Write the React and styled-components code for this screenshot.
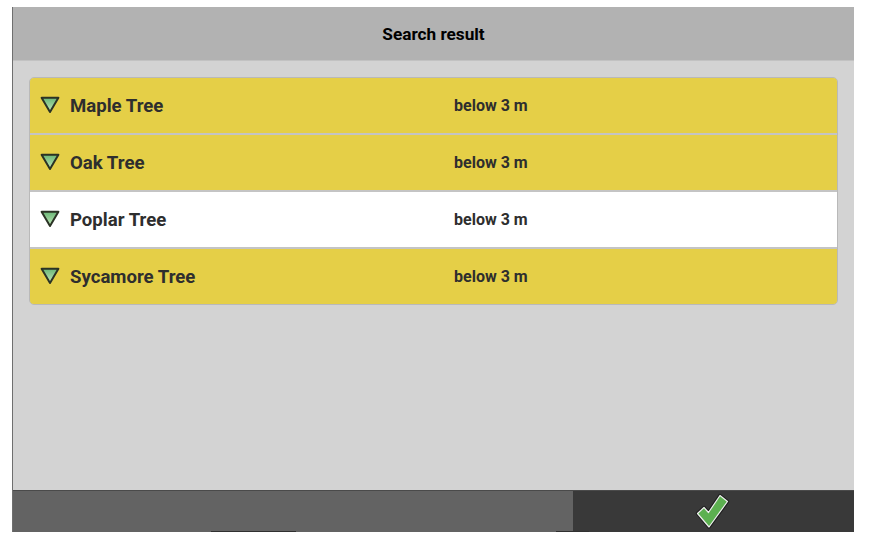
import React from "react";
import styled, { createGlobalStyle } from "styled-components";

const GlobalStyle = createGlobalStyle`
  html, body {
    margin: 0;
    padding: 0;
    background: #fff;
    font-family: Roboto, "Liberation Sans", sans-serif;
  }
`;

const trees = [
  { name: "Maple Tree", height: "below 3 m" },
  { name: "Oak Tree", height: "below 3 m" },
  { name: "Poplar Tree", height: "below 3 m", selected: true },
  { name: "Sycamore Tree", height: "below 3 m" },
];

const Page = styled.div`
  width: 842px;
  height: 525px;
  margin: 7px 0 0 12px;
  display: flex;
  flex-direction: column;
  background: #d3d3d3;
  border-left: 1px solid #6f6f6f;
  box-sizing: border-box;
`;

const Header = styled.div`
  height: 54px;
  flex-shrink: 0;
  display: flex;
  align-items: center;
  justify-content: center;
  background: #b2b2b2;
  border-bottom: 1px solid #c2c2c2;
  box-sizing: border-box;
  font-size: 17.2px;
  font-weight: 700;
  color: #000;
`;

const Content = styled.div`
  flex: 1;
  padding: 16px 16px 0 16px;
`;

const List = styled.div`
  border: 1px solid #b9b9b9;
  border-radius: 5px;
  overflow: hidden;
  display: flex;
  flex-direction: column;
`;

const Row = styled.div`
  height: 57px;
  box-sizing: border-box;
  display: flex;
  align-items: center;
  background: ${(p) => (p.$selected ? "#ffffff" : "#e5cf47")};
  color: #2e2e2e;
  font-weight: 700;
  border-bottom: 2px solid #c4c4c4;
  &:last-child {
    height: 55px;
    border-bottom: none;
  }
`;

const Arrow = styled.svg`
  width: 20px;
  height: 18px;
  margin: -2px 0 0 10px;
  flex-shrink: 0;
`;

const Name = styled.div`
  width: 384px;
  margin-left: 10px;
  font-size: 18.6px;
`;

const Height = styled.div`
  font-size: 16px;
`;

const Footer = styled.div`
  position: relative;
  height: 42px;
  flex-shrink: 0;
  display: flex;
  border-top: 1px solid #4a4a4a;
  box-sizing: border-box;
`;

const FooterSpace = styled.div`
  width: 560px;
  background: #636363;
`;

const ConfirmButton = styled.div`
  flex: 1;
  display: flex;
  align-items: center;
  justify-content: center;
  padding-right: 3px;
  background: #393939;
`;

const EdgeMark = styled.div`
  position: absolute;
  bottom: 0;
  left: ${(p) => p.$left}px;
  width: ${(p) => p.$width}px;
  height: 1px;
  background: #303030;
`;

const TreeArrow = () => (
  <Arrow viewBox="0 0 20 18">
    <defs>
      <linearGradient id="arrowFill" x1="0" y1="0" x2="0" y2="1">
        <stop offset="0" stopColor="#6ab877" />
        <stop offset="1" stopColor="#c2e6b8" />
      </linearGradient>
    </defs>
    <path d="M1.6 1.8 H18.4 L10 16 Z" fill="url(#arrowFill)" stroke="#2b3325" strokeWidth="2" strokeLinejoin="round" />
  </Arrow>
);

const CHECK_PATH = "M2.5 20.5 L9 14.5 L13.5 19.5 L25 2.5 L32.5 8.5 L14 34 Z";

const CheckIcon = () => (
  <svg width="35" height="37" viewBox="0 0 35 37">
    <path d={CHECK_PATH} fill="#5cb050" stroke="#1e1e1e" strokeWidth="3.4" strokeLinejoin="round" />
    <path d={CHECK_PATH} fill="#5cb050" stroke="#eeeeee" strokeWidth="1.2" strokeLinejoin="round" />
  </svg>
);

const App = () => {
  return (
    <>
      <GlobalStyle />
      <Page>
        <Header>Search result</Header>
        <Content>
          <List>
            {trees.map((tree) => (
              <Row key={tree.name} $selected={tree.selected}>
                <TreeArrow />
                <Name>{tree.name}</Name>
                <Height>{tree.height}</Height>
              </Row>
            ))}
          </List>
        </Content>
        <Footer>
          <FooterSpace />
          <ConfirmButton>
            <CheckIcon />
          </ConfirmButton>
          <EdgeMark $left={198} $width={85} />
          <EdgeMark $left={543} $width={33} />
        </Footer>
      </Page>
    </>
  );
};

export default App;
